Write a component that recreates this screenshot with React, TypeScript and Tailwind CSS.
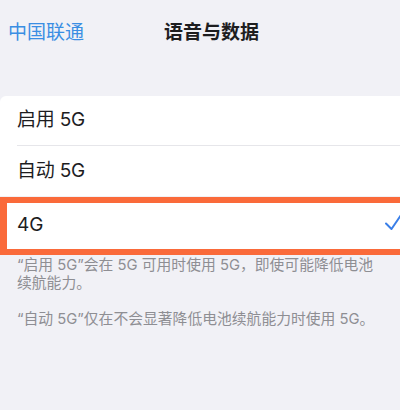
import React from "react";

const font = { fontFamily: 'Inter, "Noto Sans CJK SC", sans-serif' };

export default function App() {
  return (
    <div className="w-[400px] h-[410px] bg-[#f1f1f6] overflow-hidden" style={font}>
      {/* nav bar */}
      <div className="flex items-center h-[64px] pl-[8px]">
        <span className="text-[19px] leading-none text-[#3a8ee3]">中国联通</span>
        <span className="ml-[80px] text-[19px] leading-none font-semibold text-[#1d1d1f]">语音与数据</span>
      </div>
      <div className="h-[32px]" />
      {/* card */}
      <div className="bg-white rounded-tl-[6px]">
        <div className="h-[50px] flex items-center pl-[17px]">
          <div className="flex-1 h-full flex items-center border-b border-[#e6e6ea] text-[19px] text-[#1d1d1f] tracking-[-0.2px]">
            启用 5G
          </div>
        </div>
        <div className="h-[50px] flex items-center pl-[17px] text-[19px] text-[#1d1d1f] tracking-[-0.2px]">
          自动 5G
        </div>
      </div>
      {/* highlighted 4G row */}
      <div className="mt-[1px] h-[58px] bg-white border-l-[7px] border-y-[6px] border-[#fa6a3a] flex items-start pl-[10px] pr-0 relative">
        <span className="mt-[9px] text-[19px] leading-[26px] text-[#1d1d1f]">4G</span>
        <svg
          className="absolute right-[-3px] top-[10px]"
          width="18"
          height="18"
          viewBox="0 0 18 18"
          fill="none"
        >
          <path d="M1 10.5 L6.5 16 L17 0.5" stroke="#3a7fe8" strokeWidth="2" strokeLinecap="round" strokeLinejoin="round" />
        </svg>
      </div>
      {/* footer text */}
      <div className="pt-[1px] pl-[17px] pr-[20px] text-[14.8px] leading-[18px] text-[#8e8e93]">
        <p>“启用 5G”会在 5G 可用时使用 5G，即使可能降低电池续航能力。</p>
        <p className="mt-[18px]">“自动 5G”仅在不会显著降低电池续航能力时使用 5G。</p>
      </div>
    </div>
  );
}
